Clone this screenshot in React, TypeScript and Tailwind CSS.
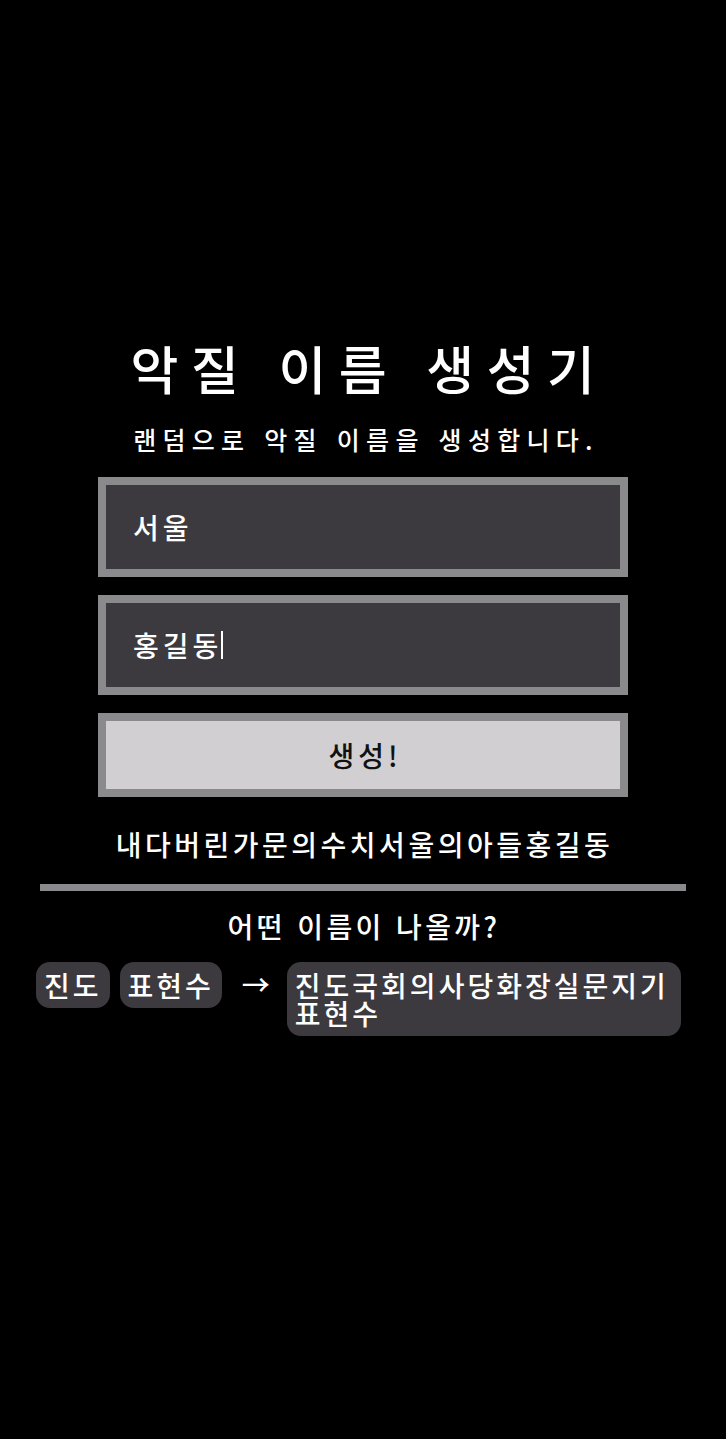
import React from 'react';

const font = { fontFamily: '"Noto Sans CJK KR", "Noto Sans", sans-serif' };

const Chip: React.FC<{ children: React.ReactNode; className?: string }> = ({ children, className = '' }) => (
  <div className={`rounded-[14px] bg-[#3c3a3e] px-[8px] py-[9px] text-[28px] leading-[28px] tracking-[3px] text-white ${className}`}>
    {children}
  </div>
);

export default function App() {
  return (
    <div className="min-h-[1439px] w-full bg-black font-medium text-white" style={font}>
      <main className="flex flex-col items-center pt-[342px]">
        <h1 className="pl-[12px] text-[52px] leading-none tracking-[12.5px] [word-spacing:3px]">악질 이름 생성기</h1>
        <p className="mt-[33px] pl-[6px] text-[25px] leading-none tracking-[6.3px] [word-spacing:2px]">
          랜덤으로 악질 이름을 생성합니다.
        </p>

        <div className="mt-[25px] flex h-[100px] w-[530px] items-center border-[8px] border-[#8a898b] bg-[#3c3a3e] pl-[27px] text-[28px] tracking-[4px]">
          서울
        </div>
        <div className="mt-[18px] flex h-[100px] w-[530px] items-center border-[8px] border-[#8a898b] bg-[#3c3a3e] pl-[27px] text-[28px] tracking-[4px]">
          <span>홍길동</span>
          <span className="-ml-[1px] h-[28px] w-[2px] bg-white" />
        </div>
        <button className="mt-[18px] flex h-[84px] w-[530px] items-center justify-center border-[8px] border-[#8a898b] bg-[#d1cfd2] pl-[4px] text-[28px] tracking-[4px] text-[#111]">
          생성!
        </button>

        <p className="mt-[33px] pl-[3px] text-[28px] leading-none tracking-[3.5px]">내다버린가문의수치서울의아들홍길동</p>

        <div className="mt-[26px] h-[7px] w-[646px] bg-[#8a898b]" />

        <h2 className="mt-[21px] pl-[2px] text-[28px] leading-none tracking-[3.3px] [word-spacing:2px]">어떤 이름이 나올까?</h2>

        <div className="mt-[22px] flex w-full items-start px-[36px]">
          <Chip>진도</Chip>
          <Chip className="ml-[10px]">표현수</Chip>
          <span className="ml-[20px] mt-[8px] text-[28px] leading-[28px]">→</span>
          <Chip className="ml-[17px] w-[394px]">진도국회의사당화장실문지기표현수</Chip>
        </div>
      </main>
    </div>
  );
}
